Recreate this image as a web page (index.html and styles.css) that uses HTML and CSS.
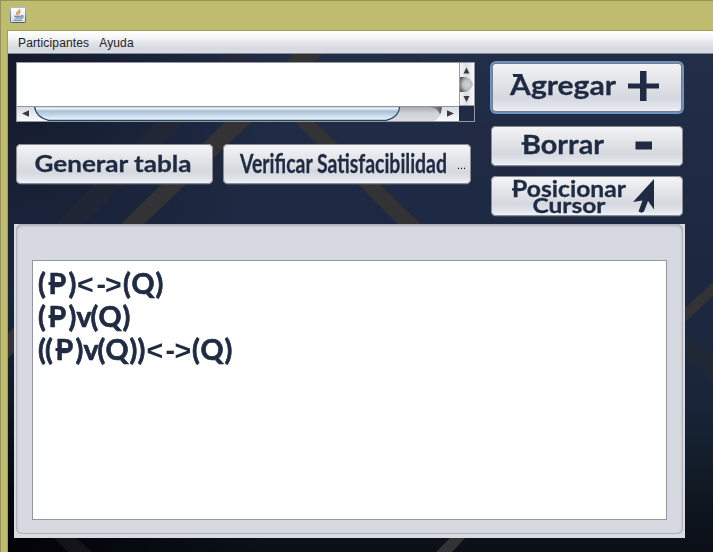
FILE: index.html
```
<!DOCTYPE html>
<html lang="es">
<head>
<meta charset="utf-8">
<title>Tabla</title>
<link rel="stylesheet" href="styles.css">
</head>
<body>
<div class="window">
  <header class="titlebar">
    <svg class="java" viewBox="0 0 16 16">
      <defs><linearGradient id="jb" x2="0" y2="1"><stop offset="0" stop-color="#a9bdd0"/><stop offset="1" stop-color="#3e5f80"/></linearGradient>
      <linearGradient id="jf" x2="0" y2="1"><stop offset="0" stop-color="#fff"/><stop offset="1" stop-color="#d9dfe7"/></linearGradient></defs>
      <rect x=".5" y=".5" width="15" height="15" rx="1" fill="url(#jf)" stroke="url(#jb)"/>
      <path d="M9.500 2Q10 3.700 7.700 5T8 8M10.500 4.500Q8 6 9.400 7.400" fill="none" stroke="#e8862e" stroke-width="1.300"/>
      <path d="M4 9.200h7M5 11h5.500M3.500 13.200h8.500M11 9q2.500-.8 2 .8T10.500 11" fill="none" stroke="#52799b" stroke-width="1.100"/>
    </svg>
  </header>
  <div class="client">
    <nav class="menubar"><span>Participantes</span><span>Ayuda</span></nav>
    <main class="content">
      <svg class="stripes" viewBox="8 54 705 498">
        <g fill="#2d2c31" opacity=".38">
          <path d="M225 54h27L85 224H55Z"/>
          <path d="M685 331l28 24v27l-28-24Z" opacity=".9"/>
          <path d="M54 538h22l16 14H68Z"/>
          <path d="M385 54h30L580 224h-30Z" opacity=".35"/>
        </g>
        <g fill="#333234">
          <path d="M294 54h29L144 224 8 358v-25l113-109Z"/>
          <path d="M295 122h20L421 224h-23Z"/>
          <path d="M685 308l28-26v14l-28 26Z"/>
          <path d="M450 538h15l-13 14h-16Z"/>
        </g>
      </svg>
      <div class="top">
        <div class="left">
          <div class="scrollpane">
            <div class="entry"></div>
            <svg class="vbar" viewBox="0 0 15 43">
              <defs>
                <linearGradient id="cell"><stop offset="0" stop-color="#f8f8fa"/><stop offset=".5" stop-color="#d9dce2"/><stop offset="1" stop-color="#fafafb"/></linearGradient>
                <radialGradient id="vt" cx=".6" cy=".5" r=".65"><stop offset="0" stop-color="#d2d3d8"/><stop offset=".5" stop-color="#bfc0c4"/><stop offset="1" stop-color="#555"/></radialGradient>
              </defs>
              <path d="M0 0h15v43H0Z" fill="url(#cell)"/>
              <path d="M0 14h5q7 1 9 7-2 7-9 8H0Z" fill="url(#vt)"/>
              <path d="M.5 0v43M0 42.500h15" stroke="#9a9ca5"/>
              <path d="M4.500 10.500 7.500 4.500l3 6ZM4.500 33l3 6 3-6Z" fill="#39393d"/>
            </svg>
            <svg class="hbar" viewBox="0 0 442 15">
              <defs>
                <linearGradient id="track" x2="0" y2="1"><stop offset="0" stop-color="#a3a4a9"/><stop offset=".5" stop-color="#d2d3d8"/><stop offset="1" stop-color="#dadbe1"/></linearGradient>
                <linearGradient id="thumb" x2="0" y2="1"><stop offset="0" stop-color="#97adc4"/><stop offset=".16" stop-color="#f0f5fa"/><stop offset=".36" stop-color="#aabfd6"/><stop offset=".55" stop-color="#bdd0e2"/><stop offset="1" stop-color="#eafcff"/></linearGradient>
                <linearGradient id="ends" x2="0" y2="1"><stop offset="0" stop-color="#d6d9df"/><stop offset=".5" stop-color="#e8eaee"/><stop offset="1" stop-color="#fafafb"/></linearGradient>
                <linearGradient id="shade"><stop offset="0" stop-color="#666" stop-opacity="0"/><stop offset="1" stop-color="#555"/></linearGradient>
              </defs>
              <path d="M0 0h442v15H0Z" fill="url(#track)"/>
              <path d="M411 0h14q0 6-2 9-1-7-12-8Z" fill="url(#shade)"/>
              <path d="M0 0h18q0 11 14 15H0ZM442 0h-17q0 11-8 15h25Z" fill="url(#ends)"/>
              <path d="M17.500 0q1 11 14 14.300H369Q382.500 11 382.500 0Z" fill="url(#thumb)"/>
              <path d="M17.500 0q1 11 14 14.300H369Q382.500 11 382.500 0" fill="none" stroke="#27435f" stroke-width="1.200"/>
              <path d="M0 .5h442" stroke="#8b95a2"/>
              <path d="M12 4.300v6.400L5 7.500ZM430 4.300v6.400l7-3.200Z" fill="#39393d"/>
            </svg>
            <div class="corner"></div>
          </div>
          <div class="row">
            <button class="btn generate"><svg viewBox="16 144 197 40"><text class="face" x="34.500" y="171.500" font-size="23.500" textLength="157" lengthAdjust="spacingAndGlyphs">Generar tabla</text></svg></button>
            <button class="btn verify"><svg viewBox="223 144 248 40"><text class="face" x="240" y="172.500" font-size="26" textLength="207" lengthAdjust="spacingAndGlyphs">Verificar Satisfacibilidad</text><text class="dots" x="457" y="169" font-size="11" textLength="9">...</text></svg></button>
          </div>
        </div>
        <div class="right">
          <button class="btn add"><svg viewBox="491 62 192 51"><text class="face" x="510" y="94.500" font-size="27.500" textLength="106" lengthAdjust="spacingAndGlyphs">Agregar</text><path class="ink" d="M512.500 74h10v3h-9ZM640 71h6.500v12.500H659v5H646.500V101H640V88.500H628v-5h12Z"/></svg></button>
          <button class="btn"><svg viewBox="491 126 192 40"><text class="face" x="522" y="153.500" font-size="26.500" textLength="82" lengthAdjust="spacingAndGlyphs">Borrar</text><path class="ink" d="M521.500 142.200h13v2.500h-13ZM635.500 141.500H652v8h-16.500Z"/></svg></button>
          <button class="btn"><svg viewBox="491 176 192 40"><text class="face" x="512" y="196.500" font-size="22.500" textLength="114" lengthAdjust="spacingAndGlyphs">Posicionar</text><text class="face" x="532.500" y="213.200" font-size="21.500" textLength="73" lengthAdjust="spacingAndGlyphs">Cursor</text><path class="ink" d="M512 188.200h11v2.400h-11ZM654 179v30.500l-6-8.500-4 10.500-2.500 1.200-3-1.200 4-11-9.500 1.500Z"/></svg></button>
        </div>
      </div>
      <section class="panel">
        <div class="frame">
          <div class="output">
            <svg viewBox="33 261 633 258">
              <g class="face formula" font-size="28.500">
                <text y="293.500" x="38 48.500 68.500 77 96.500 105 123 131.500 155.500">(P)<tspan class="arrow">&lt;-&gt;</tspan>(Q)</text>
                <text y="326.500" x="38 48.500 68.500 76.500 90.500 98.500 122.500">(P)v(Q)</text>
                <text y="359.500" x="38 45 55.500 75.500 83.500 97.500 105.500 129.500 137.500 146.500 165.500 174.500 192 200.500 224.500">((P)v(Q))<tspan class="arrow">&lt;-&gt;</tspan>(Q)</text>
              </g>
              <path class="ink" d="M48.500 282h14v3h-14ZM48.500 315h14v3h-14ZM55.500 348h14v3h-14Z"/>
            </svg>
          </div>
        </div>
      </section>
    </main>
  </div>
</div>
</body>
</html>
```
FILE: styles.css
```
* { box-sizing: border-box; }
body { margin: 0; overflow: hidden; font-family: "Liberation Sans", Arial, sans-serif; }
svg { display: block; }
.window { width: 713px; height: 552px; background: #bfbb6f; border: solid #969358; border-width: 1px 0 0 1px; display: flex; flex-direction: column; }
.titlebar { height: 29px; padding: 6px 0 0 9px; }
.java { width: 16px; height: 16px; }
.client { margin-left: 6px; border: solid #a29f55; border-width: 1px 0 0 1px; flex: 1; display: flex; flex-direction: column; }
.menubar { height: 23px; display: flex; gap: 10px; padding: 1px 10px 0; font-size: 12px; letter-spacing: .14px; line-height: 23px; color: #222; background: linear-gradient(#fff 0%, #f8f8f9 25%, #e2e4e9 55%, #d6d9e0 80%, #dadde5 100%); border-bottom: 1px solid #858a98; }
.content { position: relative; flex: 1; padding: 7px 0 0 6px; background: radial-gradient(circle at 0 100%, rgba(0,2,6,.9), rgba(0,2,6,0) 260px), radial-gradient(circle at 0 0, rgba(14,18,32,.75), rgba(14,18,32,0) 280px), linear-gradient(#222d48 0%, #1d2942 35%, #192639 70%, #101822 88%, #0b0f18 100%); }
.stripes { position: absolute; inset: 0; width: 705px; height: 498px; }
.top { position: relative; display: flex; gap: 16px; padding-left: 2px; height: 163px; }
.left { width: 459px; padding-top: 1px; }
.scrollpane { display: grid; grid-template-columns: 442px 15px; grid-template-rows: 43px 15px; border: 1px solid #9297a1; }
.entry { background: #fff; }
.vbar { width: 15px; height: 43px; }
.hbar { width: 442px; height: 15px; }
.corner { background: #202c47; }
.row { display: flex; gap: 10px; margin-top: 22px; }
.btn { display: block; position: relative; padding: 0; border: 0; height: 40px; width: 192px; border-radius: 5px; background: linear-gradient(#f5f5f7 0%, #e5e6ea 35%, #d5d8df 70%, #e0e3ea 86%, #f3f6fc 100%); box-shadow: inset 0 0 0 1px #8b8d93, 0 1px 0 rgba(110,115,125,.35); }
.btn svg { width: 100%; height: 100%; overflow: visible; }
.generate { width: 197px; }
.verify { width: 248px; }
.right { display: flex; flex-direction: column; gap: 10px; padding-top: 1px; }
.add { height: 51px; margin-bottom: 3px; box-shadow: inset 0 0 0 1px #6d91ba, inset 0 0 0 2px #777d88, 0 0 0 1px #6697cc; }
.face { font-family: Lato, "Open Sans", sans-serif; font-weight: 700; fill: #1f2b42; stroke: #1f2b42; stroke-width: .3; }
.formula { stroke-width: .7; }
.arrow { font-family: "Liberation Sans", Arial, sans-serif; font-weight: 700; stroke-width: 0; }
.dots { font-family: "Liberation Sans", Arial, sans-serif; fill: #111; }
.ink { fill: #1f2b42; }
.panel { position: relative; width: 671px; height: 314px; padding: 0 2px 4px; background: #d8dbe2; }
.frame { height: 310px; padding: 36px 16px 14px; border-radius: 6px; background: #d6d9e0; box-shadow: inset 0 0 0 1px #b0b3b9, inset 0 1px 3px rgba(40,42,48,.45); }
.output { width: 635px; height: 260px; background: #fff; border: 1px solid #9297a1; }
.output svg { width: 633px; height: 258px; }
```
